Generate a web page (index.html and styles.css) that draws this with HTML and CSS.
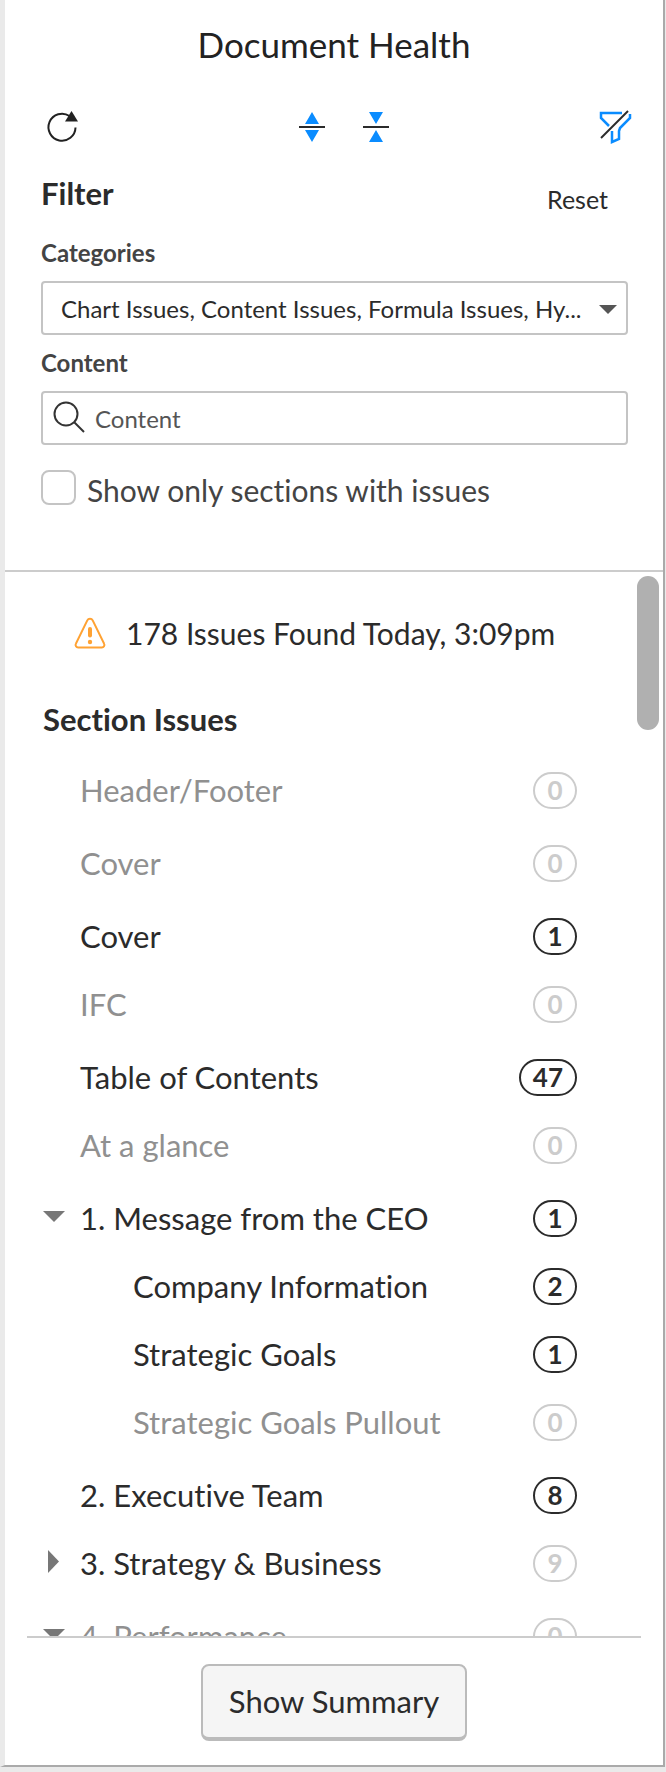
FILE: index.html
```html
<!DOCTYPE html>
<html lang="en">
<head>
    <meta charset="UTF-8">
    <title>Document Health</title>
    <link rel="stylesheet" href="styles.css">
</head>
<body>
    <div class="panel">
        <header class="panel-header">
            <h1 class="title">Document Health</h1>
            <div class="toolbar">
                <button class="icon-button" aria-label="Refresh">
                    <svg width="36" height="36" viewBox="0 0 36 36">
                        <path d="M24.5 7A13.5 13.5 0 1 0 30.5 18.5" fill="none" stroke="#222" stroke-width="2"/>
                        <path d="M26.5 2L33 12.5H20z" fill="#222"/>
                    </svg>
                </button>
                <div class="toolbar-center">
                    <button class="icon-button" aria-label="Expand all">
                        <svg width="28" height="30" viewBox="0 0 28 30">
                            <path d="M14 0l7 12H7zM14 30l7-12H7z" fill="#0a8cff"/>
                            <path d="M1 15h26" stroke="#2b2b2b" stroke-width="2"/>
                        </svg>
                    </button>
                    <button class="icon-button" aria-label="Collapse all">
                        <svg width="28" height="30" viewBox="0 0 28 30">
                            <path d="M14 12l7-12H7zM14 18l7 12H7z" fill="#0a8cff"/>
                            <path d="M1 15h26" stroke="#2b2b2b" stroke-width="2"/>
                        </svg>
                    </button>
                </div>
                <button class="icon-button" aria-label="Hide filter">
                    <svg width="34" height="34" viewBox="0 0 34 34" fill="none">
                        <path d="M24 3H3v5l8 8M32 4v4L22 18l-1 3v8l-7 3V21" stroke="#0a8cff" stroke-width="2.5"/>
                        <path d="M3 28L30 1" stroke="#2b2b2b" stroke-width="2"/>
                    </svg>
                </button>
            </div>
        </header>

        <form class="filter">
            <div class="filter-head">
                <h2 class="heading">Filter</h2>
                <button type="reset" class="reset">Reset</button>
            </div>
            <label class="field-label" for="categories">Categories</label>
            <div class="field">
                <select id="categories" class="control select">
                    <option>Chart Issues, Content Issues, Formula Issues, Hy...</option>
                </select>
                <svg class="select-arrow" width="18" height="9" viewBox="0 0 18 9"><path d="M0 0h18l-9 9z" fill="#555"/></svg>
            </div>
            <label class="field-label" for="content">Content</label>
            <div class="field">
                <input id="content" class="control search" type="text" placeholder="Content">
                <svg class="search-icon" width="32" height="32" viewBox="0 0 32 32" fill="none" stroke="#333" stroke-width="2">
                    <circle cx="13" cy="13" r="11.5"/>
                    <path d="M21 21l10 10"/>
                </svg>
            </div>
            <label class="check">
                <input type="checkbox" class="checkbox">
                <span>Show only sections with issues</span>
            </label>
        </form>

        <main class="issues">
            <div class="scroll-thumb"></div>
            <p class="summary">
                <svg width="32" height="32" viewBox="0 0 32 32">
                    <path d="M13.3 3.4a3 3 0 0 1 5.4 0L30 26.5a2.6 2.6 0 0 1-2.4 4H4.4a2.6 2.6 0 0 1-2.4-4z" fill="none" stroke="#ffa233" stroke-width="2"/>
                    <path d="M16 12v6.5" stroke="#ffa233" stroke-width="4" stroke-linecap="round"/>
                    <circle cx="16" cy="25" r="2.2" fill="#ffa233"/>
                </svg>
                178 Issues Found Today, 3:09pm
            </p>
            <h2 class="heading section-heading">Section Issues</h2>
            <div class="sections">
                <ul class="group">
                    <li class="row muted"><span class="name">Header/Footer</span><span class="count none">0</span></li>
                </ul>
                <ul class="group">
                    <li class="row muted"><span class="name">Cover</span><span class="count none">0</span></li>
                </ul>
                <ul class="group">
                    <li class="row"><span class="name">Cover</span><span class="count">1</span></li>
                    <li class="row muted"><span class="name">IFC</span><span class="count none">0</span></li>
                </ul>
                <ul class="group">
                    <li class="row"><span class="name">Table of Contents</span><span class="count">47</span></li>
                    <li class="row muted"><span class="name">At a glance</span><span class="count none">0</span></li>
                </ul>
                <ul class="group">
                    <li class="row">
                        <button class="toggle" aria-label="Collapse section"><svg width="22" height="22" viewBox="0 0 22 22"><path d="M0 4h22L11 15z" fill="#777"/></svg></button>
                        <span class="name">1. Message from the CEO</span><span class="count">1</span>
                    </li>
                    <li class="row child"><span class="name">Company Information</span><span class="count">2</span></li>
                    <li class="row child"><span class="name">Strategic Goals</span><span class="count">1</span></li>
                    <li class="row child muted"><span class="name">Strategic Goals Pullout</span><span class="count none">0</span></li>
                </ul>
                <ul class="group">
                    <li class="row"><span class="name">2. Executive Team</span><span class="count">8</span></li>
                    <li class="row">
                        <button class="toggle" aria-label="Expand section"><svg width="22" height="22" viewBox="0 0 22 22"><path d="M5-2v23l11-11.5z" fill="#777"/></svg></button>
                        <span class="name">3. Strategy &amp; Business</span><span class="count none">9</span>
                    </li>
                </ul>
                <ul class="group">
                    <li class="row muted">
                        <button class="toggle" aria-label="Collapse section"><svg width="22" height="22" viewBox="0 0 22 22"><path d="M0 4h22L11 15z" fill="#777"/></svg></button>
                        <span class="name">4. Performance</span><span class="count none">0</span>
                    </li>
                </ul>
            </div>
        </main>

        <footer class="panel-footer">
            <button class="show-summary">Show Summary</button>
        </footer>
    </div>
</body>
</html>
```

FILE: styles.css
```css
* {
    box-sizing: border-box;
}
body {
    margin: 0;
    height: 100vh;
    padding-bottom: 5px;
    display: flex;
    background: #eaeaea;
    color: #2b2b2b;
    font-family: Lato, sans-serif;
    font-size: 31px;
    font-variant-ligatures: none;
    line-height: 40px;
}
button {
    padding: 0;
    border: 0;
    background: none;
    color: inherit;
    font: inherit;
}
svg {
    display: block;
    overflow: visible;
}

.panel {
    flex: 1;
    min-width: 0;
    display: flex;
    flex-direction: column;
    margin-right: 1px;
    border-left: 5px solid #eaeaea;
    border-right: 2px solid #aaa;
    border-bottom: 2px solid #aaa;
    background: #fff;
}

.panel-header {
    padding-top: 24px;
}
.title {
    margin: 0;
    color: #222;
    font-size: 35px;
    font-weight: normal;
    text-align: center;
}
.toolbar {
    display: grid;
    grid-template-columns: 1fr auto 1fr;
    align-items: center;
    height: 40px;
    margin-top: 43px;
    padding: 0 31px 0 40px;
}
.toolbar-center {
    display: flex;
    gap: 36px;
    padding-left: 10px;
}
.icon-button:last-child {
    justify-self: end;
}
.icon-button:first-child {
    justify-self: start;
}

.filter {
    padding: 26px 35px 60px 36px;
    border-bottom: 2px solid #ccc;
}
.filter-head {
    display: flex;
    justify-content: space-between;
    align-items: flex-end;
    margin-bottom: 12px;
    padding-right: 20px;
}
.heading {
    margin: 0;
    font-size: 31px;
    font-weight: bold;
}
.reset {
    font-size: 25px;
    line-height: 28px;
}
.field-label {
    display: block;
    color: #444;
    font-size: 24px;
    font-weight: bold;
    line-height: 56px;
}
.field {
    position: relative;
}
.control {
    display: block;
    width: 100%;
    height: 54px;
    border: 2px solid #c4c4c4;
    border-radius: 4px;
    background: #fff;
    color: #2b2b2b;
    font: 24px Lato, sans-serif;
}
.select {
    appearance: none;
    padding: 0 40px 0 18px;
}
.select-arrow {
    position: absolute;
    right: 11px;
    top: 24px;
    pointer-events: none;
}
.search {
    padding: 0 16px 0 52px;
}
.search::placeholder {
    color: #555;
}
.search-icon {
    position: absolute;
    left: 12px;
    top: 10px;
}
.check {
    display: flex;
    align-items: flex-start;
    gap: 11px;
    margin-top: 25px;
    color: #444;
    font-size: 30px;
}
.checkbox {
    appearance: none;
    flex: none;
    width: 35px;
    height: 35px;
    margin: 0;
    border: 2px solid #c4c4c4;
    border-radius: 8px;
}

.issues {
    position: relative;
    flex: 1;
    min-height: 0;
    overflow: hidden;
}
.scroll-thumb {
    position: absolute;
    top: 4px;
    right: 4px;
    width: 22px;
    height: 154px;
    border-radius: 11px;
    background: #b0b0b0;
}
.summary {
    display: flex;
    align-items: center;
    gap: 20px;
    margin: 41px 0 0 69px;
    font-size: 30px;
}
.section-heading {
    margin: 46px 0 17px 38px;
}
.sections {
    display: flex;
    flex-direction: column;
    gap: 5px;
    padding: 0 86px 0 38px;
}
.group {
    margin: 0;
    padding: 0;
    list-style: none;
}
.row {
    display: flex;
    align-items: center;
    height: 68px;
    padding-left: 37px;
}
.child {
    padding-left: 90px;
}
.name {
    flex: 1;
}
.muted {
    color: #909090;
}
.toggle {
    width: 22px;
    margin: 0 15px 0 -37px;
}
.count {
    min-width: 44px;
    height: 37px;
    padding: 0 12px;
    border: 2px solid #2b2b2b;
    border-radius: 19px;
    color: #2b2b2b;
    font-size: 26px;
    font-weight: bold;
    line-height: 33px;
    text-align: center;
}
.count.none {
    border-color: #ccc;
    color: #ccc;
}

.panel-footer {
    display: flex;
    justify-content: center;
    margin: 0 22px;
    padding: 26px 0 24px;
    border-top: 2px solid #ccc;
}
.show-summary {
    padding: 15px 26px 16px;
    border: 2px solid #bbb;
    border-bottom-width: 4px;
    border-radius: 8px;
    background: #f5f5f5;
}
```
